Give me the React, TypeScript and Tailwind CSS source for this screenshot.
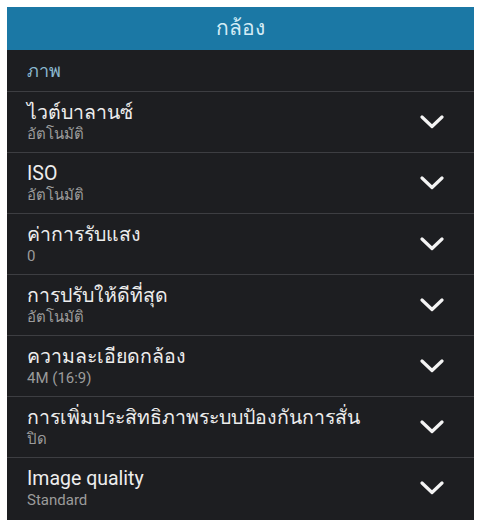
const rows = [
	{ title: 'ไวต์บาลานซ์', value: 'อัตโนมัติ' },
	{ title: 'ISO', value: 'อัตโนมัติ' },
	{ title: 'ค่าการรับแสง', value: '0' },
	{ title: 'การปรับให้ดีที่สุด', value: 'อัตโนมัติ' },
	{ title: 'ความละเอียดกล้อง', value: '4M (16:9)' },
	{ title: 'การเพิ่มประสิทธิภาพระบบป้องกันการสั่น', value: 'ปิด' },
	{ title: 'Image quality', value: 'Standard' },
];

const Chevron = () => (
	<svg width="24" height="14" viewBox="0 0 24 14" fill="none" className="shrink-0">
		<path d="M2 2l10 9.5L22 2" stroke="#f4f4f4" strokeWidth="3.2" strokeLinecap="round" strokeLinejoin="round" />
	</svg>
);

const SettingRow = ({ title, value }: { title: string; value: string }) => (
	<div className="flex h-[61px] items-center justify-between border-t border-[#3d3e42] pl-5 pr-[30px]">
		<div className="flex flex-col">
			<span className="text-[19.5px] leading-[24px] text-[#ededed]">{title}</span>
			<span className="text-[15px] leading-[18px] text-[#9b9b9b]">{value}</span>
		</div>
		<Chevron />
	</div>
);

export default function App() {
	return (
		<div className="h-[520px] w-[482px] bg-white pl-[7px] pr-[8px] pt-[7px]" style={{ fontFamily: 'Roboto, "Noto Sans", sans-serif' }}>
			<div className="h-[513px] overflow-hidden bg-[#1d1e21]">
				{/* title bar */}
				<div className="flex h-[43px] items-center justify-center bg-[#1b78a5] text-[21px] text-[#d4ecf6]">
					กล้อง
				</div>
				{/* section */}
				<div className="flex h-[41px] items-center pl-5 text-[18px] text-[#8ab8cf]">ภาพ</div>
				{rows.map((r) => (
					<SettingRow key={r.title} title={r.title} value={r.value} />
				))}
			</div>
		</div>
	);
}
